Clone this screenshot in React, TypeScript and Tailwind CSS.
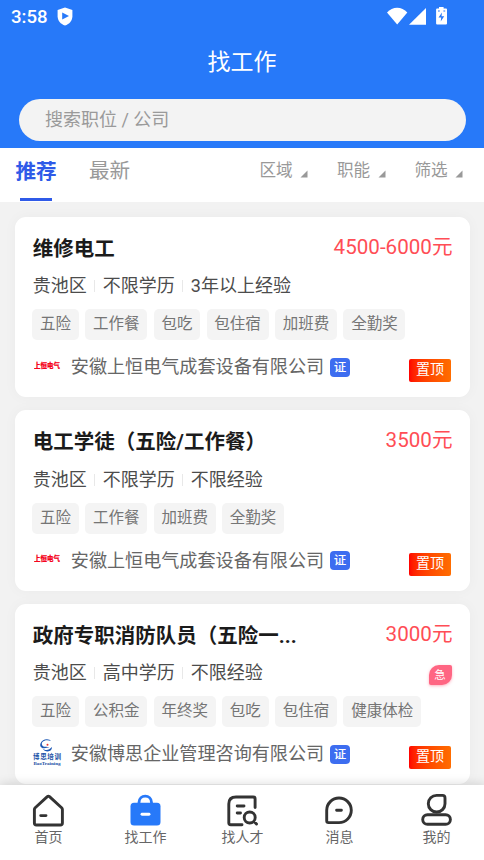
import React from 'react';

type Logo = 'shangheng' | 'bosi';
interface Job {
  title: string;
  salary: string;
  meta: string[];
  tags: string[];
  company: string;
  logo: Logo;
  urgent?: boolean;
}

const jobs: Job[] = [
  {
    title: '维修电工',
    salary: '4500-6000元',
    meta: ['贵池区', '不限学历', '3年以上经验'],
    tags: ['五险', '工作餐', '包吃', '包住宿', '加班费', '全勤奖'],
    company: '安徽上恒电气成套设备有限公司',
    logo: 'shangheng',
  },
  {
    title: '电工学徒（五险/工作餐）',
    salary: '3500元',
    meta: ['贵池区', '不限学历', '不限经验'],
    tags: ['五险', '工作餐', '加班费', '全勤奖'],
    company: '安徽上恒电气成套设备有限公司',
    logo: 'shangheng',
  },
  {
    title: '政府专职消防队员（五险一...',
    salary: '3000元',
    meta: ['贵池区', '高中学历', '不限经验'],
    tags: ['五险', '公积金', '年终奖', '包吃', '包住宿', '健康体检'],
    company: '安徽博思企业管理咨询有限公司',
    logo: 'bosi',
    urgent: true,
  },
];

function StatusBar() {
  return (
    <div className="flex h-[34px] items-center pl-[11px] pr-[37px] text-white">
      <span className="w-[46px] text-[18.6px] font-medium leading-[34px]">3:58</span>
      <svg className="-mt-[2px] h-[19px] w-[16px]" viewBox="0 0 16 19">
        <path d="M8 .4 15.4 3v6.2c0 4.4-3 7.8-7.4 9.4C3.600 17 .6 13.600.6 9.200V3Z" fill="#fff" />
        <path d="M5.200 5.400v7L12 8.900Z" fill="#2779f9" />
      </svg>
      <svg className="-mt-[2px] ml-auto h-[18px] w-[60px]" viewBox="0 0 60 18">
        <path d="M0 5.500C5.500-.8 14.800-.8 20.300 5.500L10.200 17.500Z" fill="#fff" />
        <path d="M22 17.700H39V1Z" fill="#fff" />
        <path d="M52 0h4.600v1.500H59q1 0 1 1v14q0 1-1 1h-8.900q-1 0-1-1v-14q0-1 1-1H52Z" fill="#fff" />
        <path d="M55 5.500 51.500 10.500h2.700L53.700 14.500 57.200 9.300h-2.700ZM51 3.500h1.800v1H51Zm5.400 0h1.800v1h-1.800Z" fill="#2779f9" />
      </svg>
    </div>
  );
}

function Filter({ label }: { label: string }) {
  return (
    <div className="flex items-center">
      <span className="w-[33px] whitespace-nowrap text-[16.6px] leading-[24px]">{label}</span>
      <svg className="ml-[7.500px] mr-[.5px] mt-[6px] h-[8px] w-[8px]" viewBox="0 0 8 8">
        <path d="M7.500.5v7H.5Z" fill="#999" />
      </svg>
    </div>
  );
}

function CompanyLogo({ logo }: { logo: Logo }) {
  if (logo === 'shangheng') {
    return (
      <div className="w-[38px] pl-[1.500px]">
        <svg className="h-[27px] w-[27px]" viewBox="0 0 27 27">
          <text x="0" y="14" fontSize="6.500" fontWeight="900" fill="#f5051d" stroke="#f5051d" strokeWidth=".2" textLength="26" lengthAdjust="spacingAndGlyphs">上恒电气</text>
        </svg>
      </div>
    );
  }
  return (
    <div className="w-[38px]">
      <svg className="h-[28px] w-[28px] overflow-visible" viewBox="0 0 28 28">
        <path d="M18 1C12-1.300 7.500 2 9.200 5.200c1.200 2.200 4.800 1.200 7.300 2.100-2.600.4-5 1.700-7.700.4C5 5.500 8.500-1 14-.8q3 .1 4 1.800Z" fill="#1d58b5" />
        <path d="M9 8c3 3 6.800 2.800 9.800-.9.800 4.500-6 6.800-9.800.9Z" fill="#1d58b5" />
        <circle cx="14.500" cy="4.800" r="1" fill="#e53535" />
        <text x="0" y="19" fontSize="6.500" fontWeight="700" fill="#174fa5" textLength="28" lengthAdjust="spacing">博思培训</text>
        <text x=".5" y="24.800" fontSize="4.800" fontWeight="700" fill="#174fa5" fontFamily="Liberation Serif" textLength="27" lengthAdjust="spacingAndGlyphs">BaoTraining</text>
      </svg>
    </div>
  );
}

function JobCard({ job }: { job: Job }) {
  return (
    <article className="h-[180.500px] shrink-0 rounded-[11px] bg-white px-[17.500px] pt-[17px] shadow-[0_0_14px_rgba(0,0,0,0.035)]">
      <div className="flex h-[30px] items-center justify-between">
        <h2 className="whitespace-nowrap text-[20.500px] font-bold leading-[30px] text-[#1b1b1b]">{job.title}</h2>
        <span className="-mt-[4px] whitespace-nowrap text-[20.600px] leading-[30px] text-[#ff4d55]">{job.salary}</span>
      </div>
      <div className="mt-[8.500px] flex h-[28px] items-center text-[18px] text-[#4c4c4c]">
        {job.meta.map((m, i) => (
          <React.Fragment key={m}>
            {i > 0 && <i className="mx-[7.500px] h-[12px] w-px bg-[#e8e8e8]" />}
            <span className="whitespace-nowrap leading-[28px]">{m}</span>
          </React.Fragment>
        ))}
        {job.urgent && (
          <span className="ml-auto mr-[1px] mt-[3px] h-[20px] w-[23px] rounded-[10px_2px_10px_2px] bg-[#ff6683] text-center text-[11.500px] leading-[21px] text-white shadow-[0_1px_3px_rgba(255,102,131,0.5)]">急</span>
        )}
      </div>
      <div className="-ml-[.5px] mt-[9px] flex h-[31px] gap-[6.300px]">
        {job.tags.map((t) => (
          <span key={t} className="whitespace-nowrap rounded-[5px] bg-[#f4f4f4] px-[7.800px] text-[15.500px] leading-[31px] text-[#757575]">{t}</span>
        ))}
      </div>
      <div className="mt-[12.500px] flex h-[29px] items-center">
        <CompanyLogo logo={job.logo} />
        <span className="whitespace-nowrap text-[18.100px] leading-[28px] text-[#666]">{job.company}</span>
        <span className="ml-[6px] h-[19px] w-[20px] rounded-[4px] bg-[#3d6df0] text-center text-[12.500px] font-medium leading-[20px] text-white">证</span>
        <span className="ml-auto mr-[1.500px] mt-[7px] h-[23px] w-[42px] rounded-[2px] bg-linear-to-r from-[#ff0000] to-[#ff6d00] text-center text-[14px] leading-[20px] text-white">置顶</span>
      </div>
    </article>
  );
}

const navItems = [
  {
    label: '首页',
    icon: (
      <path d="M3.200 14.700 15.300 3.600Q16.400 2.700 17.500 3.600L29.600 14.700Q30.400 15.500 30.400 16.500V30Q30.400 32 28.400 32H4.400Q2.400 32 2.400 30V16.500Q2.400 15.500 3.200 14.700ZM8.700 22.600H14" />
    ),
  },
  {
    label: '找工作',
    icon: (
      <>
        <path d="M10 9.500C10 1 22.500 1 22.500 9.500" stroke="#2779f9" />
        <rect x="1.500" y="9.800" width="30" height="22.800" rx="3.500" fill="#2779f9" stroke="none" />
        <path d="M13 21.200h7" stroke="#fff" />
      </>
    ),
  },
  {
    label: '找人才',
    icon: (
      <path d="M16 31.700H4.800Q2.800 31.700 2.800 29.700V11Q2.800 4 10 4H27.100Q29.100 4 29.100 6V14.500M11.200 13H18M11.200 20H14.500M29.200 24.500A5.500 5.500 0 1 1 18.200 24.500A5.500 5.500 0 1 1 29.200 24.500M28 28.500L30.500 31" />
    ),
  },
  {
    label: '消息',
    icon: <path d="M3.700 17.300A12.300 12.300 0 1 1 16 29.600H5.500Q3.700 29.600 3.700 27.800ZM13.600 17.300H18.400" />,
  },
  {
    label: '我的',
    icon: (
      <>
        <path d="M8.300 10.700A8.300 8.300 0 0 1 16.600 2.400H22.500Q25 2.400 25 4.900V10.700A8.300 8.300 0 0 1 8.300 10.700Z" />
        <rect x="2.700" y="21.700" width="27.700" height="9.600" rx="4.800" />
      </>
    ),
  },
];

export default function App() {
  return (
    <div className="flex h-[860px] w-[484px] flex-col overflow-hidden bg-[#f2f2f2] font-[Roboto,'Noto_Sans_CJK_SC',sans-serif]">
      <header className="h-[148px] shrink-0 bg-[#2779f9]">
        <StatusBar />
        <h1 className="h-[65px] text-center text-[23px] leading-[57px] text-white">找工作</h1>
        <div className="ml-[19px] mr-[18px] h-[42px] rounded-full bg-[#f3f3f3] pl-[26px] text-[18px] leading-[42px] text-[#9a9a9a]">搜索职位 / 公司</div>
      </header>

      <div className="flex h-[54px] shrink-0 bg-white text-[#999]">
        <div className="ml-[15.500px] flex w-[73.500px] flex-col">
          <span className="h-[50px] text-[20.600px] font-bold leading-[49px] text-[#2f5ae8]">推荐</span>
          <i className="ml-[4.500px] h-[3px] w-[32px] bg-[#2f5ae8]" />
        </div>
        <span className="text-[20.600px] leading-[46px]">最新</span>
        <div className="ml-auto mr-[20.500px] flex h-[46px] items-center gap-[28.500px]">
          <Filter label="区域" />
          <Filter label="职能" />
          <Filter label="筛选" />
        </div>
      </div>

      <main className="flex min-h-0 flex-1 flex-col gap-[13.200px] overflow-hidden pl-[15.300px] pr-[14px] pt-[14.500px]">
        {jobs.map((job) => (
          <JobCard key={job.title} job={job} />
        ))}
      </main>

      <nav className="z-10 grid h-[75px] w-[485px] shrink-0 grid-cols-5 bg-white pt-[8px] shadow-[0_-1px_10px_rgba(0,0,0,0.14)]">
        {navItems.map((n) => (
          <div key={n.label} className="flex flex-col items-center">
            <svg className="h-[34px] w-[33px]" viewBox="0 0 33 34" fill="none" stroke="#333" strokeWidth="2.900" strokeLinecap="round" strokeLinejoin="round">
              {n.icon}
            </svg>
            <span className="text-[14px] leading-[20px] text-[#666]">{n.label}</span>
          </div>
        ))}
      </nav>
    </div>
  );
}
